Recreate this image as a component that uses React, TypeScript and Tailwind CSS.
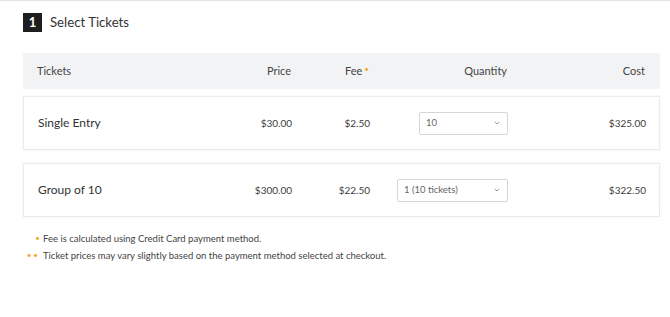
import { ChevronDown } from 'lucide-react';

const rows = [
  { name: 'Single Entry', price: '$30.00', fee: '$2.50', qty: '10', selectW: 'w-[89px]', cost: '$325.00' },
  { name: 'Group of 10', price: '$300.00', fee: '$22.50', qty: '1 (10 tickets)', selectW: 'w-[111px]', cost: '$322.50' },
];

const cols = 'grid grid-cols-[184px_70px_78px_138px_138px] items-center pl-[14px] pr-[15px]';

export default function App() {
  return (
    <div className="w-[670px] h-[317px] bg-white border-t border-[#e3e3e3] font-['Lato',sans-serif] text-[#3d3d3d]">
      <div className="pl-[23px] pr-[10px]">
        {/* step title */}
        <div className="flex items-center gap-[8px] pt-[12px]">
          <div className="w-[19px] h-[19px] bg-[#1e1e1e] text-white text-[13px] font-bold flex items-center justify-center leading-none">
            1
          </div>
          <h2 className="text-[13.2px] leading-[19px] text-[#333]">Select Tickets</h2>
        </div>

        {/* header */}
        <div className={`${cols} mt-[21px] h-[36px] bg-[#f2f3f5] text-[11px] text-[#444]`}>
          <div>Tickets</div>
          <div className="text-right">Price</div>
          <div className="text-right">
            Fee<span className="text-[#f5a623] text-[8px] align-top ml-[2px]">•</span>
          </div>
          <div className="text-right">Quantity</div>
          <div className="text-right">Cost</div>
        </div>

        {/* ticket rows */}
        <div className="flex flex-col gap-[13px] mt-[7px]">
          {rows.map((r) => (
            <div
              key={r.name}
              className={`${cols} h-[54px] bg-white border border-[#ececec] shadow-[0_0_3px_rgba(0,0,0,0.06)]`}
            >
              <div className="text-[12px] text-[#333]">{r.name}</div>
              <div className="text-right text-[10px]">{r.price}</div>
              <div className="text-right text-[10px]">{r.fee}</div>
              <div className="flex justify-end">
                <div
                  className={`${r.selectW} h-[23px] border border-[#d6d6d6] rounded-[2px] flex items-center justify-between pl-[6px] pr-[6px] text-[9.5px] text-[#666]`}
                >
                  <span>{r.qty}</span>
                  <ChevronDown className="w-[8px] h-[8px] text-[#777]" strokeWidth={2.2} />
                </div>
              </div>
              <div className="text-right text-[10px]">{r.cost}</div>
            </div>
          ))}
        </div>

        {/* notes */}
        <div className="mt-[13px] text-[9.5px] text-[#444] leading-[17px]">
          <div className="flex items-center">
            <span className="w-[20px] text-right pr-[3px] text-[#f5a623] text-[8px]">•</span>
            <span>Fee is calculated using Credit Card payment method.</span>
          </div>
          <div className="flex items-center">
            <span className="w-[20px] text-right pr-[3px] text-[#f5a623] text-[8px] tracking-[2px]">••</span>
            <span>Ticket prices may vary slightly based on the payment method selected at checkout.</span>
          </div>
        </div>
      </div>
    </div>
  );
}
